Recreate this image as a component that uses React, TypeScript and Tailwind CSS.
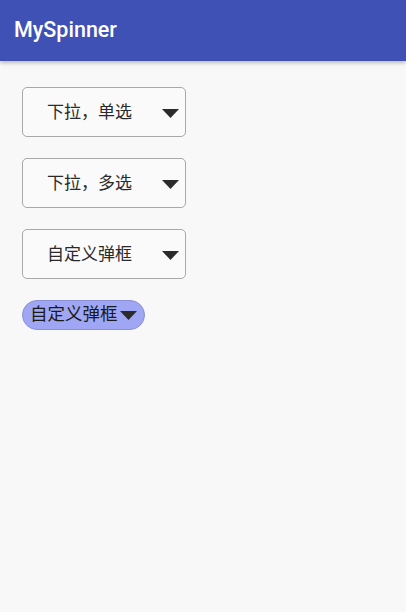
import React from 'react';

const font = { fontFamily: 'Roboto, "Noto Sans CJK SC", sans-serif' };

function Caret({ className = '' }: { className?: string }) {
  return (
    <svg width="17" height="9" viewBox="0 0 17 9" className={className}>
      <path d="M0 0 H17 L8.5 9 Z" fill="#2b2b2b" />
    </svg>
  );
}

function SpinnerBox({ label }: { label: string }) {
  return (
    <div className="relative flex h-[50px] w-[164px] items-center rounded-[5px] border border-[#a8a8a8] bg-[#fafafa]">
      <span className="ml-[24px] text-[17px] leading-none text-[#2a2a2a]">{label}</span>
      <Caret className="absolute left-[139px] top-[21px]" />
    </div>
  );
}

export default function App() {
  return (
    <div className="flex h-[612px] w-[406px] flex-col bg-[#f8f8f8]" style={font}>
      <header className="flex h-[61px] items-center bg-[#3f51b5] px-[14px] shadow-[0_2px_4px_rgba(0,0,0,0.25)]">
        <h1 className="text-[21.5px] font-medium text-white">MySpinner</h1>
      </header>
      <main className="flex flex-col items-start gap-[21px] px-[22px] pt-[26px]">
        <SpinnerBox label="下拉，单选" />
        <SpinnerBox label="下拉，多选" />
        <SpinnerBox label="自定义弹框" />
        <div className="flex h-[30px] items-center gap-[2px] rounded-full border border-[#8a90d8] bg-[#9fa7f4] pl-[7px] pr-[7px]">
          <span className="text-[17.5px] leading-none text-[#1a1a1a]">自定义弹框</span>
          <Caret />
        </div>
      </main>
    </div>
  );
}
